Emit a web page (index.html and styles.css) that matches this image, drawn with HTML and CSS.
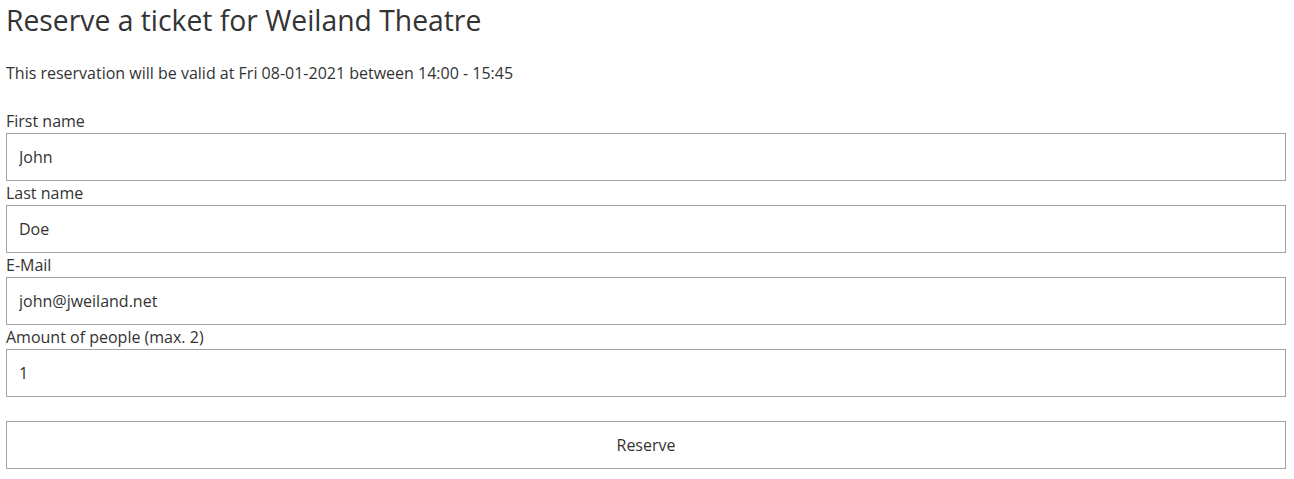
FILE: index.html
```html
<!DOCTYPE html>
<html lang="en">
<head>
<meta charset="utf-8">
<title>Reserve a ticket</title>
<link rel="stylesheet" href="styles.css">
</head>
<body>
<div class="page">
  <h1 class="title">Reserve a ticket for Weiland Theatre</h1>
  <p class="info">This reservation will be valid at Fri 08-01-2021 between 14:00 - 15:45</p>
  <form class="form">
    <label class="field">
      <span class="label">First name</span>
      <input class="input" type="text" value="John">
    </label>
    <label class="field">
      <span class="label">Last name</span>
      <input class="input" type="text" value="Doe">
    </label>
    <label class="field">
      <span class="label">E-Mail</span>
      <input class="input" type="text" value="john@jweiland.net">
    </label>
    <label class="field">
      <span class="label">Amount of people (max. 2)</span>
      <input class="input" type="text" value="1">
    </label>
    <button class="button" type="button">Reserve</button>
  </form>
</div>
</body>
</html>
```

FILE: styles.css
```css
* { box-sizing: border-box; }
html, body { margin: 0; padding: 0; background: #fff; }
body {
  font-family: "Open Sans", "Liberation Sans", sans-serif;
  color: #333;
  font-size: 16px;
}
.page {
  padding: 0 8px 0 6px;
}
.title {
  margin: 0;
  padding-top: 2px;
  font-size: 28.3px;
  font-weight: 400;
  line-height: 36px;
}
.info {
  margin: 23px 0 0 0;
  line-height: 24px;
}
.form {
  margin-top: 24px;
  display: flex;
  flex-direction: column;
}
.field {
  display: flex;
  flex-direction: column;
}
.label {
  line-height: 24px;
}
.input {
  height: 48px;
  width: 100%;
  border: 1px solid #a3a3a3;
  padding: 0 12px;
  font: inherit;
  color: #333;
  background: #fff;
  margin: 0;
  outline: none;
}
.button {
  margin-top: 24px;
  height: 48px;
  width: 100%;
  border: 1px solid #a3a3a3;
  background: #fff;
  font: inherit;
  color: #333;
}
```
